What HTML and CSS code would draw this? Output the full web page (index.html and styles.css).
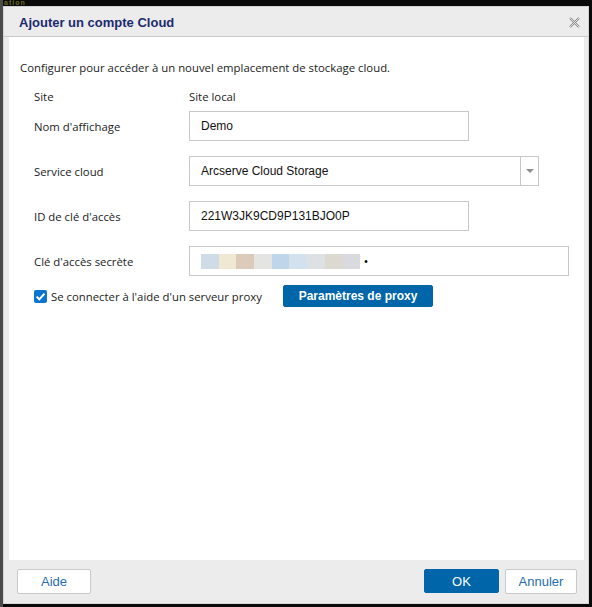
FILE: index.html
```html
<!DOCTYPE html>
<html lang="fr">
<head>
<meta charset="utf-8">
<title>Ajouter un compte Cloud</title>
<link rel="stylesheet" href="styles.css">
</head>
<body>
<div class="backdrop-text">ation</div>
<div class="dialog">
  <div class="titlebar">
    <span class="title">Ajouter un compte Cloud</span>
    <span class="close" aria-label="Fermer">
      <svg width="11" height="11" viewBox="0 0 11 11">
        <path d="M1 1 L10 10 M10 1 L1 10" stroke="#8a8a8a" stroke-width="2.2" fill="none"/>
        <path d="M1 1 L10 10 M10 1 L1 10" stroke="#f2f2f2" stroke-width="0.8" fill="none"/>
      </svg>
    </span>
  </div>
  <div class="content">
    <p class="intro">Configurer pour accéder à un nouvel emplacement de stockage cloud.</p>
    <div class="site-row">
      <span class="label">Site</span>
      <span class="value">Site local</span>
    </div>
    <div class="form">
      <span class="label">Nom d'affichage</span>
      <div class="field field-short">Demo</div>

      <span class="label">Service cloud</span>
      <div class="field field-select">
        <span class="select-text">Arcserve Cloud Storage</span>
        <span class="select-btn"><span class="caret"></span></span>
      </div>

      <span class="label">ID de clé d'accès</span>
      <div class="field field-short">221W3JK9CD9P131BJO0P</div>

      <span class="label">Clé d'accès secrète</span>
      <div class="field field-long">
        <span class="mask">
          <span class="b1"></span><span class="b2"></span><span class="b3"></span><span class="b4"></span><span class="b5"></span><span class="b6"></span><span class="b7"></span><span class="b8"></span><span class="b9"></span>
        </span>
        <span class="dot">•</span>
      </div>
    </div>
    <div class="proxy-row">
      <label class="check">
        <span class="checkbox">
          <svg width="13" height="13" viewBox="0 0 13 13"><path d="M2.6 6.6 L5.3 9.3 L10.5 3.6" stroke="#fff" stroke-width="2" fill="none"/></svg>
        </span>
        <span class="check-label">Se connecter à l'aide d'un serveur proxy</span>
      </label>
      <button class="btn btn-primary btn-proxy">Paramètres de proxy</button>
    </div>
  </div>
  <div class="footer">
    <button class="btn btn-secondary btn-help">Aide</button>
    <div class="footer-right">
      <button class="btn btn-primary btn-ok">OK</button>
      <button class="btn btn-secondary btn-cancel">Annuler</button>
    </div>
  </div>
</div>
</body>
</html>
```
FILE: styles.css
```css
html, body {
  margin: 0;
  padding: 0;
}
body {
  width: 592px;
  height: 607px;
  background: #0a0a0a;
  overflow: hidden;
  position: relative;
  border-left: 3px solid #4a4a4a;
  box-sizing: border-box;
  padding-top: 6px;
}
.backdrop-text {
  position: absolute;
  left: 1px;
  top: 0;
  font-family: "Liberation Sans", sans-serif;
  font-weight: bold;
  font-size: 7px;
  line-height: 6px;
  color: #6b6a1e;
  letter-spacing: 1px;
}
.dialog {
  position: relative;
  width: 586px;
  height: 598px;
  background: #ececec;
  border: 1px solid #d4d4d4;
  box-sizing: border-box;
  display: flex;
  flex-direction: column;
}
.titlebar {
  height: 30px;
  box-sizing: border-box;
  border-bottom: 1px solid #c9c9c9;
  display: flex;
  align-items: center;
  justify-content: space-between;
  padding: 0 8px 0 15px;
}
.title {
  font-family: "Liberation Sans", Arial, sans-serif;
  font-weight: bold;
  font-size: 13px;
  color: #1c2a6e;
  padding-top: 1px;
}
.close {
  display: flex;
  width: 11px;
  height: 11px;
  margin-top: 2px;
}
.content {
  flex: 1;
  background: #fff;
  margin: 0 4px 0 5px;
  padding: 23px 0 0 11px;
  font-family: "Open Sans", "Noto Sans", sans-serif;
  font-size: 11.35px;
  color: #222;
}
.intro {
  margin: 0;
  line-height: 16px;
}
.site-row {
  display: flex;
  margin: 13px 0 6px 14px;
  line-height: 16px;
}
.label {
  width: 155px;
  flex: none;
}
.form {
  display: grid;
  grid-template-columns: 155px auto;
  row-gap: 15px;
  align-items: center;
  margin-left: 14px;
}
.field {
  height: 30px;
  box-sizing: border-box;
  border: 1px solid #c8c8c8;
  display: flex;
  align-items: center;
  padding-left: 11px;
  font-family: "Liberation Sans", Arial, sans-serif;
  font-size: 12px;
  color: #111;
}
.field-short { width: 280px; }
.field-long { width: 380px; height: 30px; }
.field-select {
  width: 350px;
  padding-left: 0;
  justify-content: space-between;
}
.select-text { padding-left: 11px; }
.select-btn {
  width: 17px;
  height: 28px;
  border-left: 1px solid #c8c8c8;
  display: flex;
  align-items: center;
  justify-content: center;
}
.caret {
  width: 0;
  height: 0;
  border-left: 4px solid transparent;
  border-right: 4px solid transparent;
  border-top: 4px solid #8e8e8e;
}
.mask {
  display: flex;
  height: 15px;
}
.mask span { width: 17.7px; height: 15px; }
.b1 { background: #cfdbe6; }
.b2 { background: #f0e8d2; }
.b3 { background: #dccbbb; }
.b4 { background: #e4e4e2; }
.b5 { background: #bfd5e9; }
.b6 { background: #d3e1ef; }
.b7 { background: #dde1e4; }
.b8 { background: #dbd9d0; }
.b9 { background: #d8dadd; }
.dot {
  margin-left: 4px;
  font-size: 10px;
  color: #000;
}
.proxy-row {
  display: flex;
  align-items: center;
  margin: 9px 0 0 14px;
}
.check {
  display: flex;
  align-items: center;
  width: 249px;
}
.checkbox {
  width: 13px;
  height: 13px;
  background: #0a75d1;
  border-radius: 2px;
  display: flex;
  margin-right: 4px;
}
.btn {
  box-sizing: border-box;
  font-family: "Liberation Sans", Arial, sans-serif;
  border-radius: 2px;
  cursor: pointer;
  padding: 0;
}
.btn-primary {
  background: #0065a9;
  border: 1px solid #0065a9;
  color: #fff;
}
.btn-secondary {
  background: #fff;
  border: 1px solid #c9c9c9;
  color: #1f6db3;
  font-size: 13px;
}
.btn-proxy {
  width: 150px;
  height: 22px;
  font-weight: bold;
  font-size: 12px;
}
.footer {
  height: 43px;
  display: flex;
  align-items: center;
  justify-content: space-between;
  padding: 0 11px 0 13px;
}
.footer-right {
  display: flex;
  gap: 6px;
}
.btn-help { width: 74px; height: 25px; }
.btn-ok { width: 75px; height: 24px; font-size: 13px; }
.btn-cancel { width: 72px; height: 25px; }
```
